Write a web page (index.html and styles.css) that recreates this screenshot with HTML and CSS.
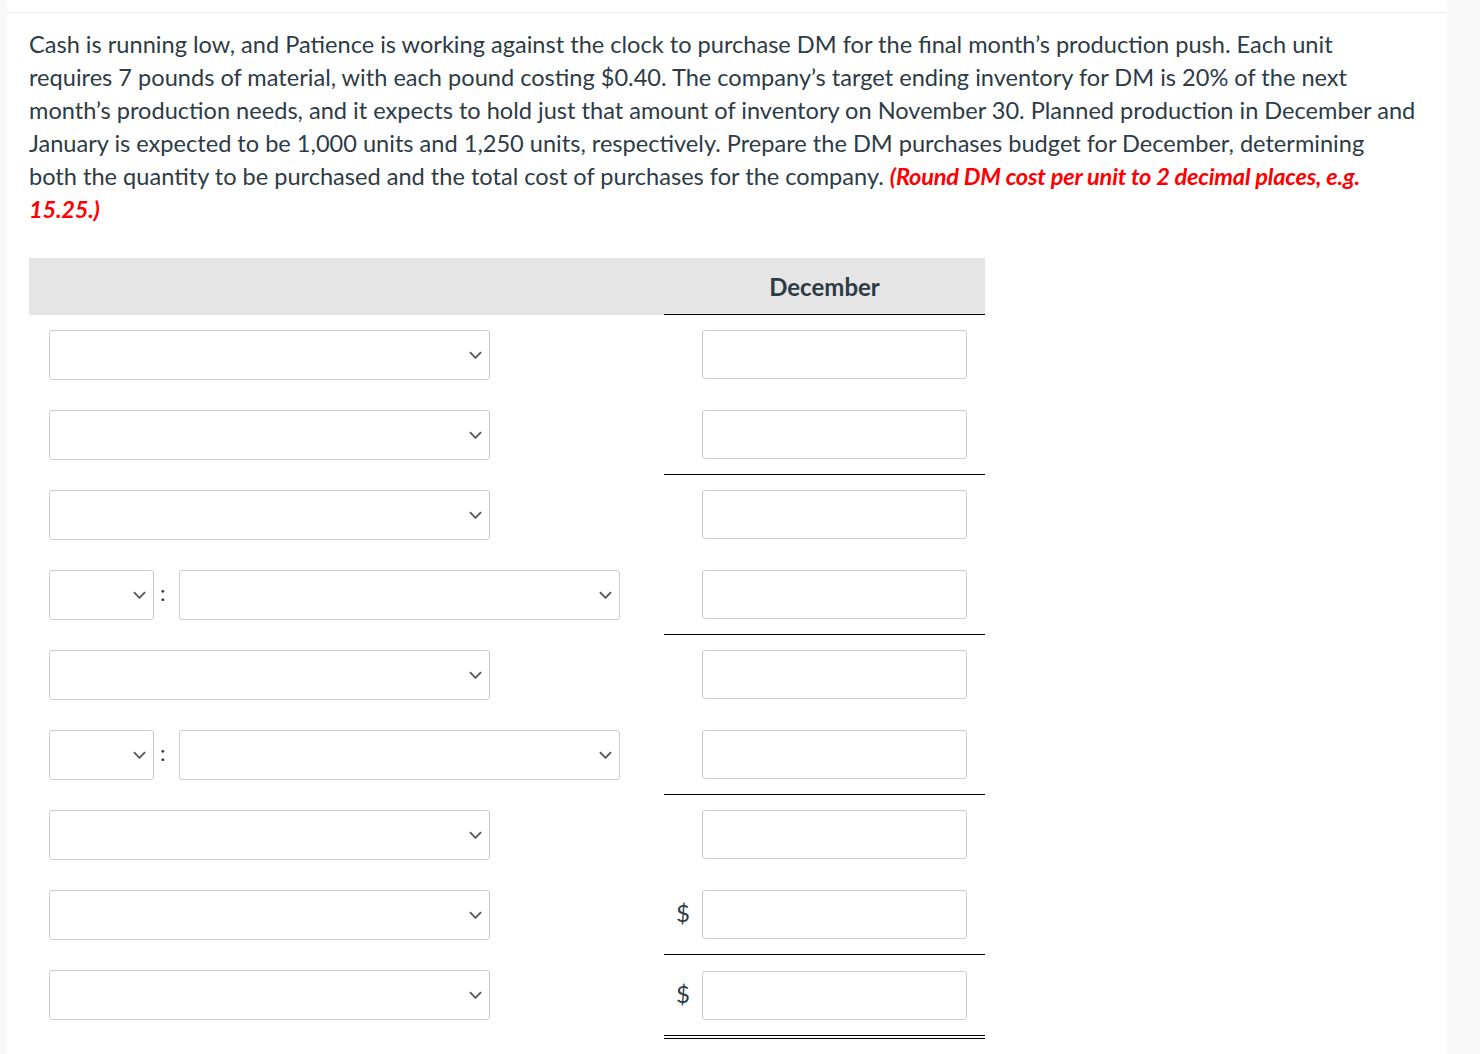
FILE: index.html
```html
<!DOCTYPE html>
<html>
<head>
<meta charset="utf-8">
<link rel="stylesheet" href="styles.css">
</head>
<body>
<div class="page">
  <div class="topline"></div>
  <div class="content">
    <p class="question">Cash is running low, and Patience is working against the clock to purchase DM for the final month’s production push. Each unit requires 7 pounds of material, with each pound costing $0.40. The company’s target ending inventory for DM is 20% of the next month’s production needs, and it expects to hold just that amount of inventory on November 30. Planned production in December and January is expected to be 1,000 units and 1,250 units, respectively. Prepare the DM purchases budget for December, determining both the quantity to be purchased and the total cost of purchases for the company. <em class="hint">(Round DM cost per unit to 2 decimal places, e.g. 15.25.)</em></p>

    <table class="budget">
      <thead>
        <tr>
          <th class="label-head"></th>
          <th class="col-head">December</th>
        </tr>
      </thead>
      <tbody>
        <tr>
          <td class="label"><div class="cell"><div class="select wide"><svg viewBox="0 0 14 8" class="chev"><path d="M1 1 L7 7 L13 1"/></svg></div></div></td>
          <td class="value"><div class="cell"><span class="cur"></span><div class="input"></div></div></td>
        </tr>
        <tr class="underline">
          <td class="label"><div class="cell"><div class="select wide"><svg viewBox="0 0 14 8" class="chev"><path d="M1 1 L7 7 L13 1"/></svg></div></div></td>
          <td class="value"><div class="cell"><span class="cur"></span><div class="input"></div></div></td>
        </tr>
        <tr>
          <td class="label"><div class="cell"><div class="select wide"><svg viewBox="0 0 14 8" class="chev"><path d="M1 1 L7 7 L13 1"/></svg></div></div></td>
          <td class="value"><div class="cell"><span class="cur"></span><div class="input"></div></div></td>
        </tr>
        <tr class="underline">
          <td class="label"><div class="cell"><div class="select small"><svg viewBox="0 0 14 8" class="chev"><path d="M1 1 L7 7 L13 1"/></svg></div><span class="colon">:</span><div class="select wide"><svg viewBox="0 0 14 8" class="chev"><path d="M1 1 L7 7 L13 1"/></svg></div></div></td>
          <td class="value"><div class="cell"><span class="cur"></span><div class="input"></div></div></td>
        </tr>
        <tr>
          <td class="label"><div class="cell"><div class="select wide"><svg viewBox="0 0 14 8" class="chev"><path d="M1 1 L7 7 L13 1"/></svg></div></div></td>
          <td class="value"><div class="cell"><span class="cur"></span><div class="input"></div></div></td>
        </tr>
        <tr class="underline">
          <td class="label"><div class="cell"><div class="select small"><svg viewBox="0 0 14 8" class="chev"><path d="M1 1 L7 7 L13 1"/></svg></div><span class="colon">:</span><div class="select wide"><svg viewBox="0 0 14 8" class="chev"><path d="M1 1 L7 7 L13 1"/></svg></div></div></td>
          <td class="value"><div class="cell"><span class="cur"></span><div class="input"></div></div></td>
        </tr>
        <tr>
          <td class="label"><div class="cell"><div class="select wide"><svg viewBox="0 0 14 8" class="chev"><path d="M1 1 L7 7 L13 1"/></svg></div></div></td>
          <td class="value"><div class="cell"><span class="cur"></span><div class="input"></div></div></td>
        </tr>
        <tr class="underline">
          <td class="label"><div class="cell"><div class="select wide"><svg viewBox="0 0 14 8" class="chev"><path d="M1 1 L7 7 L13 1"/></svg></div></div></td>
          <td class="value"><div class="cell"><span class="cur">$</span><div class="input"></div></div></td>
        </tr>
        <tr class="double">
          <td class="label"><div class="cell"><div class="select wide"><svg viewBox="0 0 14 8" class="chev"><path d="M1 1 L7 7 L13 1"/></svg></div></div></td>
          <td class="value"><div class="cell"><span class="cur">$</span><div class="input"></div></div></td>
        </tr>
      </tbody>
    </table>
  </div>
</div>
</body>
</html>
```

FILE: styles.css
```css
* { box-sizing: border-box; }

html, body {
  margin: 0;
  padding: 0;
  background: #f8f8f8;
}

body {
  font-family: Lato, "Liberation Sans", sans-serif;
  color: #2d3b45;
}

.page {
  margin-left: 7px;
  width: 1440px;
  min-height: 1054px;
  background: #ffffff;
}

.topline {
  height: 13px;
  border-bottom: 1px solid #e8e8e8;
}

.content {
  padding: 0 22px;
}

.question {
  margin: 15px 0 0 0;
  font-size: 23.58px;
  line-height: 33px;
  width: 1387.5px;
}

.hint {
  color: #ff0000;
  font-weight: bold;
  font-style: italic;
  letter-spacing: -0.22px;
}

.budget {
  margin-top: 32px;
  border-collapse: separate;
  border-spacing: 0;
}

.budget th {
  background: #e5e5e5;
  height: 57px;
  padding: 0;
  font-size: 24px;
  font-weight: bold;
}

.label-head {
  width: 635px;
}

.col-head {
  width: 321px;
  text-align: center;
  border-bottom: 1px solid #000;
}

.budget td {
  padding: 0;
  vertical-align: top;
}

.label .cell {
  height: 80px;
  padding-left: 20px;
  display: flex;
  align-items: center;
}

.value {
  border-bottom: 1px solid transparent;
}

.value .cell {
  height: 79px;
  padding-right: 18px;
  display: flex;
  align-items: center;
  justify-content: flex-end;
}

.underline .value {
  border-bottom: 1px solid #000;
}

.double .value {
  border-bottom: 4px double #000;
}

.double .value .cell {
  height: 80px;
}

.cur {
  width: 38px;
  font-size: 24px;
  text-align: center;
  position: relative;
  top: -2px;
}

.input {
  width: 265px;
  height: 49px;
  border: 1px solid #cccccc;
  border-radius: 3px;
  background: #fff;
}

.select {
  height: 50px;
  border: 1px solid #cccccc;
  border-radius: 3px;
  background: #fff;
  display: flex;
  align-items: center;
  justify-content: flex-end;
  padding-right: 7px;
}

.select.wide { width: 441px; }
.select.small { width: 105px; }

.chev {
  width: 13px;
  height: 8px;
  fill: none;
  stroke: #555555;
  stroke-width: 2;
}

.colon {
  width: 25px;
  padding-left: 6px;
  font-size: 22px;
  line-height: 1;
  position: relative;
  top: -2px;
}
```
